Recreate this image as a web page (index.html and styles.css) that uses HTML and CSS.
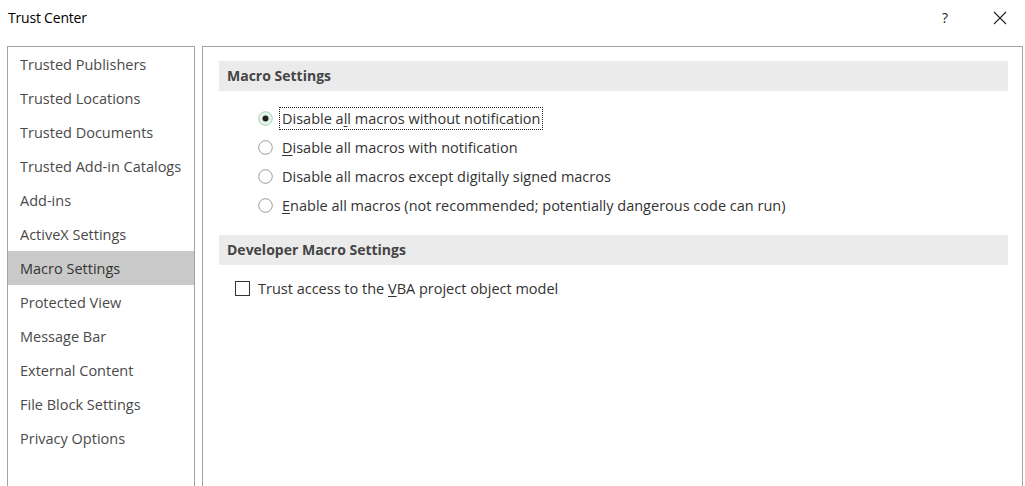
FILE: index.html
```html
<!DOCTYPE html>
<html>
<head>
<meta charset="utf-8">
<link rel="stylesheet" href="styles.css">
</head>
<body>
<div class="dialog">
  <div class="titlebar">
    <span class="title">Trust Center</span>
    <div class="title-buttons">
      <span class="help">?</span>
      <svg class="close" width="14" height="14" viewBox="0 0 14 14"><path d="M1 1 L13 13 M13 1 L1 13" stroke="#222" stroke-width="1.1" fill="none"/></svg>
    </div>
  </div>
  <div class="main">
    <ul class="nav">
      <li>Trusted Publishers</li>
      <li>Trusted Locations</li>
      <li>Trusted Documents</li>
      <li>Trusted Add-in Catalogs</li>
      <li>Add-ins</li>
      <li>ActiveX Settings</li>
      <li class="selected">Macro Settings</li>
      <li>Protected View</li>
      <li>Message Bar</li>
      <li>External Content</li>
      <li>File Block Settings</li>
      <li>Privacy Options</li>
    </ul>
    <div class="content">
      <div class="section-head">Macro Settings</div>
      <div class="radios">
        <div class="option">
          <svg class="radio" width="15" height="15" viewBox="0 0 15 15"><circle cx="7.5" cy="7.5" r="6.8" fill="#e6f4ec" stroke="#9fd3b8" stroke-width="1"/><circle cx="7.5" cy="7.5" r="3" fill="#222"/></svg>
          <span class="label focus">Disable a<u>l</u>l macros without notification</span>
        </div>
        <div class="option">
          <svg class="radio" width="15" height="15" viewBox="0 0 15 15"><circle cx="7.5" cy="7.5" r="6.8" fill="#fff" stroke="#9a9a9a" stroke-width="1"/></svg>
          <span class="label"><u>D</u>isable all macros with notification</span>
        </div>
        <div class="option">
          <svg class="radio" width="15" height="15" viewBox="0 0 15 15"><circle cx="7.5" cy="7.5" r="6.8" fill="#fff" stroke="#9a9a9a" stroke-width="1"/></svg>
          <span class="label">Disable all macros except di<u>g</u>itally signed macros</span>
        </div>
        <div class="option">
          <svg class="radio" width="15" height="15" viewBox="0 0 15 15"><circle cx="7.5" cy="7.5" r="6.8" fill="#fff" stroke="#9a9a9a" stroke-width="1"/></svg>
          <span class="label"><u>E</u>nable all macros (not recommended; potentially dangerous code can run)</span>
        </div>
      </div>
      <div class="section-head dev">Developer Macro Settings</div>
      <div class="check-row">
        <span class="checkbox"></span>
        <span class="label">Trust access to the <u>V</u>BA project object model</span>
      </div>
    </div>
  </div>
</div>
</body>
</html>
```
FILE: styles.css
```css
html, body {
  margin: 0;
  padding: 0;
  background: #fff;
  width: 1025px;
  height: 486px;
  overflow: hidden;
}
body {
  font-family: "Open Sans", "Noto Sans", sans-serif;
  color: #333;
}
.dialog {
  display: flex;
  flex-direction: column;
  height: 486px;
}
.titlebar {
  height: 46px;
  display: flex;
  align-items: flex-start;
  justify-content: space-between;
  box-sizing: border-box;
  padding: 8px 0 0 8px;
}
.title {
  font-size: 14px;
  color: #000;
  line-height: 20px;
  letter-spacing: -0.2px;
}
.title-buttons {
  display: flex;
  align-items: center;
  gap: 45px;
  padding-right: 18px;
  height: 20px;
}
.help {
  font-size: 14px;
  color: #222;
  line-height: 20px;
}
.close {
  display: block;
}
.main {
  flex: 1;
  display: flex;
  gap: 7px;
  padding: 0 2px 0 7px;
  min-height: 0;
}
.nav {
  list-style: none;
  margin: 0;
  padding: 0;
  width: 186px;
  border: 1px solid #a3a3a3;
  border-bottom: none;
  flex: none;
}
.nav li {
  height: 34px;
  line-height: 36px;
  padding-left: 12px;
  font-size: 14.5px;
  color: #4a4a4a;
}
.nav li.selected {
  background: #c9c9c9;
  color: #333;
}
.content {
  flex: 1;
  border: 1px solid #a3a3a3;
  border-bottom: none;
  padding: 14px 14px 0 16px;
}
.section-head {
  height: 30px;
  line-height: 30px;
  background: #ebebeb;
  padding-left: 8px;
  font-size: 14px;
  font-weight: 700;
  color: #454545;
}
.radios {
  padding: 13px 0 15px 39px;
}
.option {
  height: 29px;
  display: flex;
  align-items: center;
}
.radio {
  flex: none;
  display: block;
}
.label {
  font-size: 14.5px;
  color: #333;
  line-height: 21px;
}
.option .label {
  margin-left: 6px;
  padding: 0 2px;
  border: 1px dotted transparent;
}
.option .label.focus {
  border-color: #222;
}
.check-row {
  margin-top: 9px;
  height: 29px;
  display: flex;
  align-items: center;
  padding-left: 16px;
}
.checkbox {
  width: 13px;
  height: 13px;
  border: 1px solid #333;
  flex: none;
  margin-right: 8px;
}
u {
  text-decoration: underline;
  text-underline-offset: 2px;
}
```
